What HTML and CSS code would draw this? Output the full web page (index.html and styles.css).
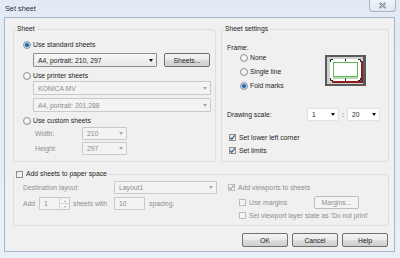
FILE: index.html
```html
<!DOCTYPE html>
<html>
<head>
<meta charset="utf-8">
<link rel="stylesheet" href="styles.css">
</head>
<body>
<div class="window">
  <div class="titlebar">
    <span class="title">Set sheet</span>
    <div class="close">
      <svg width="9" height="7" viewBox="0 0 9 7"><path d="M1.5 1 L7.5 6 M7.5 1 L1.5 6" stroke="#6f7c8c" stroke-width="1.7" fill="none"/><path d="M1.5 1 L7.5 6 M7.5 1 L1.5 6" stroke="#eef2f7" stroke-width="0.6" fill="none"/></svg>
    </div>
  </div>
  <div class="client">
    <div class="top-row">
      <fieldset class="group g-sheet">
        <legend>Sheet</legend>
        <div class="col sheet-body">
          <div class="opt o-std"><span class="rb on"></span><span>Use standard sheets</span></div>
          <div class="line l-std">
            <div class="combo c-std"><span class="ctext">A4, portrait: 210, 297</span><span class="arr"></span></div>
            <div class="btn b-sheets">Sheets...</div>
          </div>
          <div class="opt o-prn"><span class="rb"></span><span>Use printer sheets</span></div>
          <div class="combo dis c-prn"><span class="ctext">KONICA MV</span><span class="arr"></span></div>
          <div class="combo dis c-prn c-prn2"><span class="ctext">A4, portrait: 201,288</span><span class="arr"></span></div>
          <div class="opt o-cus"><span class="rb"></span><span>Use custom sheets</span></div>
          <div class="line l-w"><span class="dim-lbl dtext">Width:</span><div class="combo dis c-small"><span class="ctext">210</span><span class="arr"></span></div></div>
          <div class="line l-h"><span class="dim-lbl dtext">Height:</span><div class="combo dis c-small"><span class="ctext">297</span><span class="arr"></span></div></div>
        </div>
      </fieldset>
      <fieldset class="group g-settings">
        <legend>Sheet settings</legend>
        <div class="col settings-body">
          <div class="frame-lbl">Frame:</div>
          <div class="frame-row">
            <div class="col frame-opts">
              <div class="opt"><span class="rb"></span><span>None</span></div>
              <div class="opt"><span class="rb"></span><span>Single line</span></div>
              <div class="opt"><span class="rb on"></span><span>Fold marks</span></div>
            </div>
            <svg class="preview" width="41" height="31" viewBox="0 0 41 31">
              <rect x="0" y="0" width="41" height="31" fill="#5b5b5b"/>
              <rect x="2" y="2" width="36" height="27" fill="#cfcfcf"/>
              <rect x="7" y="6" width="31" height="22" fill="#8c1f1f"/>
              <rect x="5" y="4" width="31" height="22" fill="#ffffff"/>
              <rect x="8.5" y="7.5" width="24" height="14" fill="none" stroke="#5fb65f" stroke-width="1"/>
              <rect x="8" y="22" width="25" height="2" fill="#b9dcb4"/>
              <path d="M5.5 7 V4.5 H8 M33 4.5 H35.5 V7 M5.5 23 V25.5 H8 M33 25.5 H35.5 V23" stroke="#222" stroke-width="1" fill="none"/>
              <path d="M20.5 4 V6.5 M20.5 23.5 V26" stroke="#222" stroke-width="1"/>
            </svg>
          </div>
          <div class="line scale-row">
            <span class="scale-lbl">Drawing scale:</span>
            <div class="combo c-scale"><span class="ctext">1</span><span class="arr"></span></div>
            <span class="colon">:</span>
            <div class="combo c-scale c-scale2"><span class="ctext">20</span><span class="arr"></span></div>
          </div>
          <div class="opt chk-row chk1"><span class="cb on"><svg width="7" height="7" viewBox="0 0 7 7"><path d="M1.3 3.6 L2.8 5.3 L5.8 1.3" stroke="#3b4f86" stroke-width="1.2" fill="none"/></svg></span><span>Set lower left corner</span></div>
          <div class="opt chk-row chk2"><span class="cb on"><svg width="7" height="7" viewBox="0 0 7 7"><path d="M1.3 3.6 L2.8 5.3 L5.8 1.3" stroke="#3b4f86" stroke-width="1.2" fill="none"/></svg></span><span>Set limits</span></div>
        </div>
      </fieldset>
    </div>
    <fieldset class="group g-paper">
      <legend class="paper-legend"><span class="cb"></span><span>Add sheets to paper space</span></legend>
      <div class="paper-body">
        <div class="col paper-left">
          <div class="line p-row1"><span class="dtext dest-lbl">Destination layout:</span><div class="combo dis c-layout"><span class="ctext">Layout1</span><span class="arr"></span></div></div>
          <div class="line p-row2">
            <span class="dtext add-lbl">Add</span>
            <div class="spin"><span class="ctext">1</span><div class="spin-btns"><span class="sb up"></span><span class="sb down"></span></div></div>
            <span class="dtext sw">sheets with</span>
            <div class="field">10</div>
            <span class="dtext sp">spacing.</span>
          </div>
        </div>
        <div class="col paper-right">
          <div class="opt dtext v-row1"><span class="cb dis"><svg width="7" height="7" viewBox="0 0 7 7"><path d="M1.3 3.6 L2.8 5.3 L5.8 1.3" stroke="#a4a4a4" stroke-width="1.2" fill="none"/></svg></span><span>Add viewports to sheets</span></div>
          <div class="line v-row2"><div class="opt dtext margins-opt"><span class="cb dis"></span><span>Use margins</span></div><div class="btn dis-btn b-margins">Margins...</div></div>
          <div class="opt dtext v-row3"><span class="cb dis"></span><span>Set viewport layer state as 'Do not print'</span></div>
        </div>
      </div>
    </fieldset>
    <div class="buttons">
      <div class="btn b-dlg">OK</div>
      <div class="btn b-dlg">Cancel</div>
      <div class="btn b-dlg">Help</div>
    </div>
  </div>
</div>
</body>
</html>
```

FILE: styles.css
```css
* { box-sizing: border-box; }
html, body { margin: 0; padding: 0; }
body {
  width: 400px; height: 258px; overflow: hidden; background: #ffffff;
  font-family: "Liberation Sans", Arial, sans-serif; font-size: 6.8px; color: #1e1e1e;
}
.window {
  width: 400px; height: 258px;
  background: linear-gradient(#e2ebf5, #e8eff7);
  display: flex; flex-direction: column;
}
.titlebar { height: 17px; flex: none; display: flex; align-items: flex-start; }
.title { font-size: 7.3px; line-height: 9px; margin: 4px 0 0 5px; color: #23303e; }
.close {
  margin-left: auto; margin-right: 4px; width: 27px; height: 12px;
  border: 1px solid #a6b4c4; border-top: none; border-radius: 0 0 4px 4px;
  background: linear-gradient(#f1f5fa, #dfe7f0);
  display: flex; align-items: center; justify-content: center;
}
.client {
  margin: 0 5px 0 4px; height: 235px; flex: none;
  border: 1px solid #aab7c6; background: #f0f0f0;
  padding: 7px 5px 0 8px;
  display: flex; flex-direction: column;
}
.col { display: flex; flex-direction: column; }
.line { display: flex; align-items: center; }
.top-row { display: flex; gap: 5px; height: 137px; flex: none; }
.group {
  margin: 0; padding: 0; min-width: 0;
  border: 1px solid #d5dfe5; border-radius: 3px;
}
.group > legend { padding: 0 2px; margin-left: 1px; height: 8px; line-height: 8px; }
.g-sheet { width: 203px; height: 137px; }
.g-settings { width: 168px; height: 137px; }

.opt { display: flex; align-items: center; height: 11px; white-space: nowrap; }
.rb {
  width: 8px; height: 8px; border-radius: 50%; flex: none; margin-right: 2px;
  border: 1px solid #8d949c;
  background: radial-gradient(circle at 45% 40%, #ffffff 0, #f2f2f2 40%, #d6d6d6 100%);
}
.rb.on { background: radial-gradient(circle, #1d5c9f 0, #2b6fb5 1.5px, #bcd5ee 2.6px, #f2f6fa 3.6px); }
.cb {
  width: 7px; height: 7px; flex: none; margin-right: 3px;
  border: 1px solid #8e8f8f; background: linear-gradient(135deg, #e4e4e4, #fbfbfb);
  display: flex; align-items: center; justify-content: center; overflow: hidden;
}
.cb svg { flex: none; }
.cb.dis { border-color: #bcbcbc; background: #f4f4f4; }

.combo {
  display: flex; align-items: center; height: 14px; flex: none;
  border: 1px solid #8a8e94; border-radius: 1px;
  background: linear-gradient(#f7f7f7, #e7e7e7);
  padding: 0 3px 0 4px; white-space: nowrap;
}
.ctext { flex: 1; }
.arr {
  width: 0; height: 0; flex: none;
  border-left: 2.5px solid transparent; border-right: 2.5px solid transparent;
  border-top: 3px solid #111;
}
.combo.dis { border-color: #c9c9c9; background: #f3f3f3; color: #8d8d8d; }
.combo.dis .arr { border-top-color: #a8a8a8; }
.dtext { color: #8f8f8f; }

.btn {
  height: 14px; flex: none;
  border: 1px solid #707070; border-radius: 2px;
  background: linear-gradient(#f3f3f3 0, #ebebeb 45%, #dddddd 50%, #cfcfcf 100%);
  display: flex; align-items: center; justify-content: center;
  color: #1e1e1e;
}

/* left group */
.sheet-body { padding-left: 9px; }
.o-std { margin-top: 6px; }
.l-std { margin-top: 3px; margin-left: 10px; height: 14px; }
.c-std { width: 124px; }
.b-sheets { width: 46px; margin-left: 7px; }
.o-prn { margin-top: 3px; }
.c-prn { width: 178px; margin-left: 10px; }
.c-prn2 { margin-top: 3px; }
.o-cus { margin-top: 3px; }
.l-w { margin-top: 1px; height: 13px; }
.l-h { margin-top: 2px; height: 13px; }
.dim-lbl { width: 47px; margin-left: 12px; }
.c-small { width: 45px; height: 13px; }

/* right group */
.settings-body { padding-left: 5px; }
.frame-lbl { margin-top: 10px; height: 9px; line-height: 9px; }
.frame-row { display: flex; align-items: flex-start; }
.frame-opts { width: 85px; margin-left: 13px; gap: 3px; }
.preview { margin-top: 3px; flex: none; display: block; }
.scale-row { margin-top: 17px; height: 13px; }
.scale-lbl { width: 80px; }
.c-scale { width: 32px; height: 13px; background: #ffffff; border-color: #e2e2e2; }
.c-scale2 { width: 33px; }
.colon { width: 8px; text-align: center; }
.chk-row { margin-left: 2px; }
.chk1 { margin-top: 11px; }
.chk2 { margin-top: 2px; }

/* paper space group */
.g-paper { margin-top: 8px; height: 56px; flex: none; }
.g-paper > legend.paper-legend { display: flex; align-items: center; padding: 0 1px; }
.paper-body { display: flex; }
.paper-left { width: 203px; padding-left: 9px; flex: none; }
.p-row1 { margin-top: 3px; height: 13px; }
.p-row2 { margin-top: 3px; height: 13px; }
.dest-lbl { width: 91px; }
.c-layout { width: 103px; height: 13px; color: #6f6f6f; }
.add-lbl { width: 16px; }
.spin {
  width: 31px; height: 13px; display: flex; align-items: center;
  border: 1px solid #c9c9c9; background: #f3f3f3; color: #8d8d8d; padding-left: 4px;
}
.spin-btns { width: 10px; height: 11px; display: flex; flex-direction: column; border-left: 1px solid #d6d6d6; }
.sb { flex: 1; display: flex; align-items: center; justify-content: center; }
.sb.up { border-bottom: 1px solid #d6d6d6; }
.sb.up::before { content: ""; border-left: 1.5px solid transparent; border-right: 1.5px solid transparent; border-bottom: 2px solid #b0b0b0; }
.sb.down::before { content: ""; border-left: 1.5px solid transparent; border-right: 1.5px solid transparent; border-top: 2px solid #b0b0b0; }
.sw { width: 41px; margin-left: 3px; }
.field {
  width: 31px; height: 13px; display: flex; align-items: center;
  border: 1px solid #c9c9c9; background: #f3f3f3; color: #8d8d8d; padding-left: 4px;
}
.sp { margin-left: 4px; }
.paper-right { margin-left: 11px; }
.v-row1 { margin-top: 3px; height: 13px; }
.v-row2 { margin-top: 2px; height: 13px; margin-left: 11px; }
.margins-opt { width: 75px; }
.b-margins { width: 45px; height: 13px; }
.dis-btn { border-color: #bdbdbd; background: #f4f4f4; color: #8f8f8f; }
.v-row3 { margin-top: 1px; margin-left: 11px; }

/* dialog buttons */
.buttons { display: flex; justify-content: flex-end; gap: 4px; margin-top: 7px; padding-right: 1px; }
.b-dlg { width: 46px; }
```
